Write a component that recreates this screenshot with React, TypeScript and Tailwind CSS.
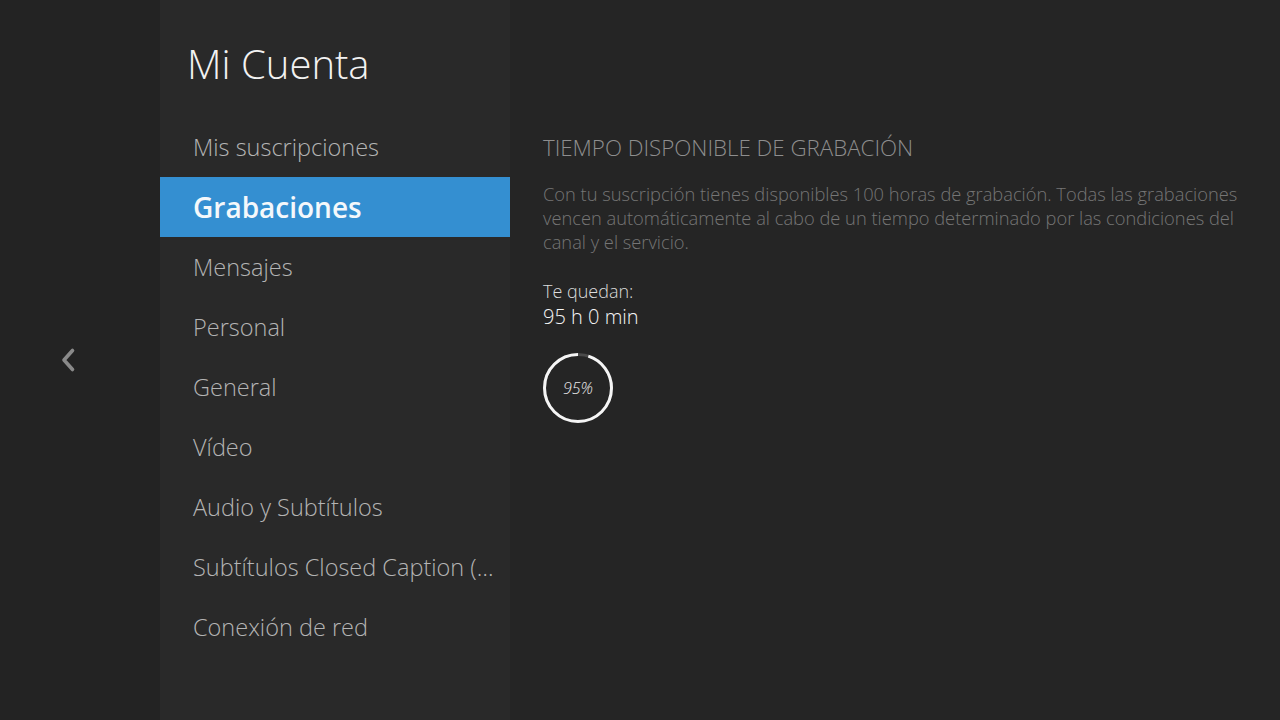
import React from "react";

const menu = [
  "Mis suscripciones",
  "Grabaciones",
  "Mensajes",
  "Personal",
  "General",
  "Vídeo",
  "Audio y Subtítulos",
  "Subtítulos Closed Caption (CC)",
  "Conexión de red",
];

const ProgressRing = ({ percent }: { percent: number }) => {
  const r = 33.5;
  const c = 2 * Math.PI * r;
  return (
    <div className="relative h-[70px] w-[70px]">
      <svg width="70" height="70" viewBox="0 0 70 70" className="-rotate-90">
        <circle cx="35" cy="35" r={r} fill="none" stroke="#4a4a4a" strokeWidth="3" />
        <circle
          cx="35"
          cy="35"
          r={r}
          fill="none"
          stroke="#f5f5f5"
          strokeWidth="3"
          strokeDasharray={`${(c * percent) / 100} ${c}`}
          strokeDashoffset={-(c * (100 - percent)) / 100}
        />
      </svg>
      <span className="absolute inset-0 flex items-center justify-center text-[16px] font-light italic text-[#e8e8e8]">
        {percent}%
      </span>
    </div>
  );
};

export default function App() {
  const active = "Grabaciones";
  return (
    <div
      className="flex h-[720px] w-[1280px] overflow-hidden bg-[#252525]"
      style={{ fontFamily: '"Open Sans", "Noto Sans", sans-serif' }}
    >
      <div className="flex w-[160px] items-center bg-[#232323] pl-[60px]">
        <svg width="16" height="26" viewBox="0 0 16 26">
          <path
            d="M12.5 3.5 L4 13 L12.5 22.5"
            fill="none"
            stroke="#8a8a8a"
            strokeWidth="3.6"
            strokeLinecap="round"
            strokeLinejoin="round"
          />
        </svg>
      </div>

      <div className="flex w-[350px] flex-col bg-[#292929] pt-[44px]">
        <h1 className="pl-[27px] text-[40px] font-light leading-[40px] text-[#f2f2f2]">
          Mi Cuenta
        </h1>
        <ul className="mt-[33px]">
          {menu.map((item) =>
            item === active ? (
              <li
                key={item}
                className="h-[60px] bg-[#348fd1] pl-[33px] text-[28px] font-semibold leading-[60px] text-[#f4f8fb]"
              >
                {item}
              </li>
            ) : (
              <li
                key={item}
                className="h-[60px] truncate pl-[33px] pr-[12px] text-[23.5px] font-light leading-[60px] text-[#b4b4b4]"
              >
                {item}
              </li>
            )
          )}
        </ul>
      </div>

      <div className="flex flex-1 flex-col pl-[33px] pt-[136px]">
        <h2 className="text-[22.3px] font-light leading-[24px] text-[#8e8e8e]">
          TIEMPO DISPONIBLE DE GRABACIÓN
        </h2>
        <p className="mt-[22px] text-[18.3px] font-light leading-[24px] text-[#757575]">
          Con tu suscripción tienes disponibles 100 horas de grabación. Todas las grabaciones
          <br />
          vencen automáticamente al cabo de un tiempo determinado por las condiciones del
          <br />
          canal y el servicio.
        </p>
        <p className="mt-[25px] text-[18px] font-light leading-[24px] text-[#dcdcdc]">Te quedan:</p>
        <p className="mt-[1px] text-[20px] font-[350] leading-[26px] text-[#f5f5f5]">95 h 0 min</p>
        <div className="mt-[23px]">
          <ProgressRing percent={95} />
        </div>
      </div>
    </div>
  );
}
